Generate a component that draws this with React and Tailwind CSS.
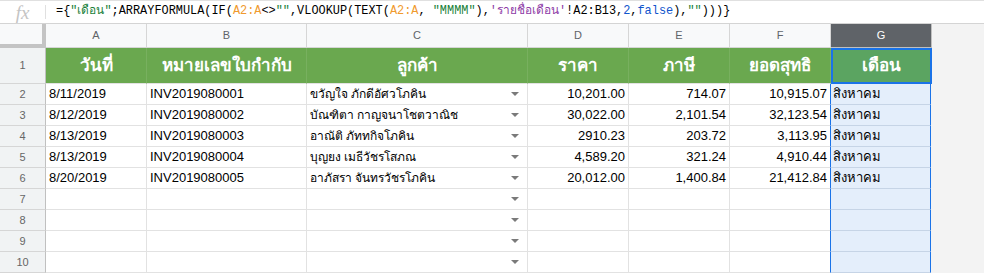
import React from "react";

const rows = [
  ["2", "8/11/2019", "INV2019080001", "ขวัญใจ ภักดีอัศวโภคิน", "10,201.00", "714.07", "10,915.07", "สิงหาคม"],
  ["3", "8/12/2019", "INV2019080002", "บัณฑิตา กาญจนาโชตวาณิช", "30,022.00", "2,101.54", "32,123.54", "สิงหาคม"],
  ["4", "8/13/2019", "INV2019080003", "อาณัติ ภัททกิจโภคิน", "2910.23", "203.72", "3,113.95", "สิงหาคม"],
  ["5", "8/13/2019", "INV2019080004", "บุญยง เมธีวัชรโสภณ", "4,589.20", "321.24", "4,910.44", "สิงหาคม"],
  ["6", "8/20/2019", "INV2019080005", "อาภัสรา จันทรวัชรโภคิน", "20,012.00", "1,400.84", "21,412.84", "สิงหาคม"],
  ["7", "", "", "", "", "", "", ""],
  ["8", "", "", "", "", "", "", ""],
  ["9", "", "", "", "", "", "", ""],
  ["10", "", "", "", "", "", "", ""],
];

const font = { fontFamily: "'Liberation Sans', Arial, 'Noto Sans', sans-serif" };

function Arrow() {
  return (
    <svg width="8" height="4" viewBox="0 0 8 4" className="shrink-0">
      <path d="M0 0 L8 0 L4 4 Z" fill="#7a7a7a" />
    </svg>
  );
}

export default function App() {
  return (
    <div className="w-[984px] h-[273px] overflow-hidden bg-white text-black" style={font}>
      {/* formula bar */}
      <div className="flex items-center h-[24px] border-t border-b border-t-[#e0e0e0] border-b-[#d4d4d4] bg-white">
        <div className="w-[45px] h-full flex items-center justify-center shrink-0">
          <span className="text-[19px] italic text-[#c4c4c4] leading-none" style={{ fontFamily: "'Liberation Serif', serif" }}>fx</span>
        </div>
        <div className="w-px h-[14px] bg-[#e0e0e0]" />
        <div className="pl-[10px] text-[11.9px] whitespace-nowrap leading-none" style={{ fontFamily: "'Liberation Mono', 'DejaVu Sans Mono', monospace" }}>
          <span>{"={"}</span>
          <span className="text-[#188038]">"เดือน"</span>
          <span>;ARRAYFORMULA(IF(</span>
          <span className="text-[#f09a2e]">A2:A</span>
          <span>{"<>"}</span>
          <span className="text-[#188038]">""</span>
          <span>,VLOOKUP(TEXT(</span>
          <span className="text-[#f09a2e]">A2:A</span>
          <span>, </span>
          <span className="text-[#188038]">"MMMM"</span>
          <span>),</span>
          <span className="text-[#8e3ba6]">'รายชื่อเดือน'</span>
          <span>!A2:B13,</span>
          <span className="text-[#1155cc]">2</span>
          <span>,</span>
          <span className="text-[#1155cc]">false</span>
          <span>),</span>
          <span className="text-[#188038]">""</span>
          <span>{")))}"}</span>
        </div>
      </div>

      {/* column headers */}
      <div className="flex h-[24px]">
        <div className="w-[46px] shrink-0 bg-[#f8f9fa] border-r-[4px] border-b-[4px] border-[#c4c4c4]" />
        {["A", "B", "C", "D", "E", "F"].map((l, i) => (
          <div
            key={l}
            className={
              "shrink-0 bg-[#f8f9fa] border-r border-b border-[#d6d6d6] flex items-center justify-center text-[11px] text-[#5f6368] " +
              (i === 1 ? "w-[160px]" : i === 2 ? "w-[221px]" : "w-[101px]")
            }
          >
            {l}
          </div>
        ))}
        <div className="w-[101px] shrink-0 bg-[#5f6368] border-r border-b border-[#c0c0c0] flex items-center justify-center text-[11px] text-white">G</div>
        <div className="flex-1 bg-[#f3f3f3]" />
      </div>

      {/* header row 1 */}
      <div className="flex h-[36px]">
        <div className="w-[46px] shrink-0 bg-[#f1f3f4] border-r border-b border-r-[#c0c0c0] border-b-[#d6d6d6] flex items-center justify-center text-[11px] text-[#666]">1</div>
        {[
          ["วันที่", "w-[101px]"],
          ["หมายเลขใบกำกับ", "w-[160px]"],
          ["ลูกค้า", "w-[221px]"],
          ["ราคา", "w-[101px]"],
          ["ภาษี", "w-[101px]"],
          ["ยอดสุทธิ", "w-[101px]"],
        ].map(([t, w]) => (
          <div key={t} className={"shrink-0 bg-[#6aa84f] border-r border-b border-r-[#78b05f] border-b-[#e2e2e2] flex items-center justify-center text-white font-bold text-[17px] " + w}>
            {t}
          </div>
        ))}
        <div className="w-[101px] shrink-0 bg-[#5ba461] border-2 border-[#1a73e8] flex items-center justify-center text-white font-bold text-[17px]">เดือน</div>
        <div className="flex-1 bg-[#f3f3f3]" />
      </div>

      {/* data rows */}
      {rows.map((r) => (
        <div key={r[0]} className="flex h-[21px] text-[13px]">
          <div className="w-[46px] shrink-0 bg-[#f1f3f4] border-r border-b border-r-[#c0c0c0] border-b-[#d6d6d6] flex items-center justify-center text-[11px] text-[#666]">{r[0]}</div>
          <div className="w-[101px] shrink-0 border-r border-b border-[#e2e2e2] flex items-center pl-[3px] whitespace-nowrap">{r[1]}</div>
          <div className="w-[160px] shrink-0 border-r border-b border-[#e2e2e2] flex items-center pl-[3px] whitespace-nowrap">{r[2]}</div>
          <div className="w-[221px] shrink-0 border-r border-b border-[#e2e2e2] flex items-center justify-between pl-[3px] pr-[8px] whitespace-nowrap">
            <span className="text-[12px]">{r[3]}</span>
            <Arrow />
          </div>
          <div className="w-[101px] shrink-0 border-r border-b border-[#e2e2e2] flex items-center justify-end pr-[3px] whitespace-nowrap">{r[4]}</div>
          <div className="w-[101px] shrink-0 border-r border-b border-[#e2e2e2] flex items-center justify-end pr-[3px] whitespace-nowrap">{r[5]}</div>
          <div className="w-[101px] shrink-0 border-r border-b border-r-[#e2e2e2] border-b-[#e2e2e2] flex items-center justify-end pr-[3px] whitespace-nowrap">{r[6]}</div>
          <div className="w-[101px] shrink-0 bg-[#e4eefb] border-l border-r border-l-[#1a73e8] border-r-[#1a73e8] border-b border-b-[#c6d4e6] flex items-center pl-[2px] whitespace-nowrap -ml-px">{r[7]}</div>
          <div className="flex-1 bg-[#f3f3f3]" />
        </div>
      ))}
    </div>
  );
}
